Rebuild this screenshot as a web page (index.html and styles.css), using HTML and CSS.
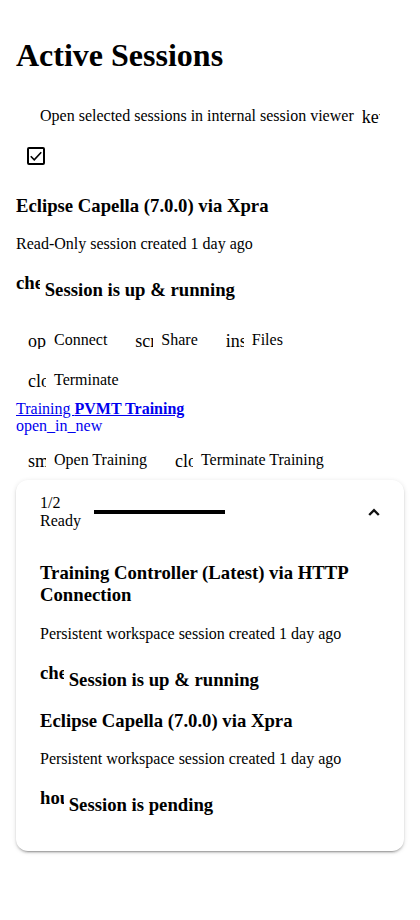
FILE: index.html
```html
<!DOCTYPE html>
<html lang="en">
<head>
<meta charset="utf-8">
<title>Active Sessions</title>
<link rel="stylesheet" href="styles.css">
</head>
<body>
<div class="page">
  <h1 class="page-title">Active Sessions</h1>

  <div class="viewer-option">
    <span class="viewer-label">Open selected sessions in internal session viewer</span>
    <span class="icon-sm">keyboard</span>
  </div>
  <div class="checkbox">
    <span class="checkbox-box">
      <svg width="14" height="14" viewBox="0 0 24 24"><path d="M3 12.5 L9 18.5 L21 5.5" fill="none" stroke="#000" stroke-width="2.8"/></svg>
    </span>
  </div>

  <h3 class="session-name">Eclipse Capella (7.0.0) via Xpra</h3>
  <p class="session-meta">Read-Only session created 1 day ago</p>
  <h3 class="session-status"><span class="status-icon">check</span> Session is up &amp; running</h3>

  <div class="actions">
    <button class="btn"><span class="btn-icon">open_in_browser</span><span class="btn-label">Connect</span></button>
    <button class="btn"><span class="btn-icon">screen_share</span><span class="btn-label">Share</span></button>
    <button class="btn"><span class="btn-icon">insert_drive_file</span><span class="btn-label">Files</span></button>
    <button class="btn"><span class="btn-icon">close</span><span class="btn-label">Terminate</span></button>
  </div>

  <a class="training-link" href="#">
    <span class="link-title">Training <b>PVMT Training</b></span>
    <span class="link-icon">open_in_new</span>
  </a>

  <div class="actions">
    <button class="btn"><span class="btn-icon">smart_display</span><span class="btn-label">Open Training</span></button>
    <button class="btn"><span class="btn-icon">close</span><span class="btn-label">Terminate Training</span></button>
  </div>

  <div class="panel">
    <div class="panel-header">
      <div class="panel-title">1/2 Ready</div>
      <div class="progress"></div>
      <div class="spacer"></div>
      <svg class="indicator" width="12" height="8" viewBox="0 0 12 8"><polyline points="1.2,7 6,2.2 10.8,7" fill="none" stroke="#111" stroke-width="2.4"/></svg>
    </div>
    <div class="panel-body">
      <h3 class="session-name">Training Controller (Latest) via HTTP Connection</h3>
      <p class="session-meta">Persistent workspace session created 1 day ago</p>
      <h3 class="session-status"><span class="status-icon">check</span> Session is up &amp; running</h3>

      <h3 class="session-name">Eclipse Capella (7.0.0) via Xpra</h3>
      <p class="session-meta">Persistent workspace session created 1 day ago</p>
      <h3 class="session-status"><span class="status-icon">hourglass_empty</span> Session is pending</h3>
    </div>
  </div>
</div>
</body>
</html>
```

FILE: styles.css
```css
html, body {
  margin: 0;
  padding: 0;
  background: #fff;
}

body {
  font-family: "Liberation Serif", "Times New Roman", serif;
  font-size: 16px;
  color: #000;
}

.page {
  padding: 16px;
}

.page-title {
  font-size: 32px;
  font-weight: bold;
  margin: 21.44px 0;
}

.viewer-option {
  display: flex;
  align-items: center;
  height: 40px;
  padding-left: 24px;
}

.icon-sm {
  display: inline-block;
  width: 18px;
  height: 18px;
  font-size: 18px;
  overflow: hidden;
  white-space: nowrap;
  margin-left: 8px;
}

.checkbox {
  width: 40px;
  height: 40px;
  padding: 11px;
  box-sizing: border-box;
}

.checkbox-box {
  display: flex;
  align-items: center;
  justify-content: center;
  width: 18px;
  height: 18px;
  box-sizing: border-box;
  border: 2px solid #000;
  border-radius: 2px;
}

.session-name,
.session-status {
  font-size: 18.72px;
  font-weight: bold;
  margin: 18.72px 0;
}

.session-meta {
  margin: 16px 0;
}

.status-icon {
  display: inline-block;
  width: 24px;
  height: 24px;
  overflow: hidden;
  white-space: nowrap;
}

.actions {
  display: flex;
  flex-wrap: wrap;
}

.btn {
  display: inline-flex;
  align-items: center;
  height: 40px;
  padding: 0 16px 0 12px;
  margin: 0;
  border: none;
  background: transparent;
  font-family: inherit;
  font-size: 16px;
  color: #000;
  cursor: pointer;
}

.btn-icon {
  display: inline-block;
  width: 18px;
  height: 18px;
  font-size: 18px;
  overflow: hidden;
  white-space: nowrap;
  margin-right: 8px;
  flex-shrink: 0;
}

.btn-label {
  white-space: nowrap;
}

.training-link {
  display: block;
  color: #0000ee;
  text-decoration: none;
  line-height: 17px;
  margin-bottom: 6px;
}

.link-title {
  text-decoration: underline;
}

.link-icon {
  display: block;
}

.panel {
  background: #fff;
  border-radius: 12px;
  box-shadow: 0 3px 1px -2px rgba(0, 0, 0, 0.2), 0 2px 2px 0 rgba(0, 0, 0, 0.14), 0 1px 5px 0 rgba(0, 0, 0, 0.12);
}

.panel-header {
  display: flex;
  align-items: center;
  height: 64px;
  padding: 0 24px;
}

.panel-title {
  width: 42px;
  margin-right: 12px;
}

.progress {
  width: 131px;
  height: 4px;
  background: #000;
}

.spacer {
  flex: 1;
}

.indicator {
  display: block;
}

.panel-body {
  padding: 0 24px 16px;
  overflow: hidden;
}
```
